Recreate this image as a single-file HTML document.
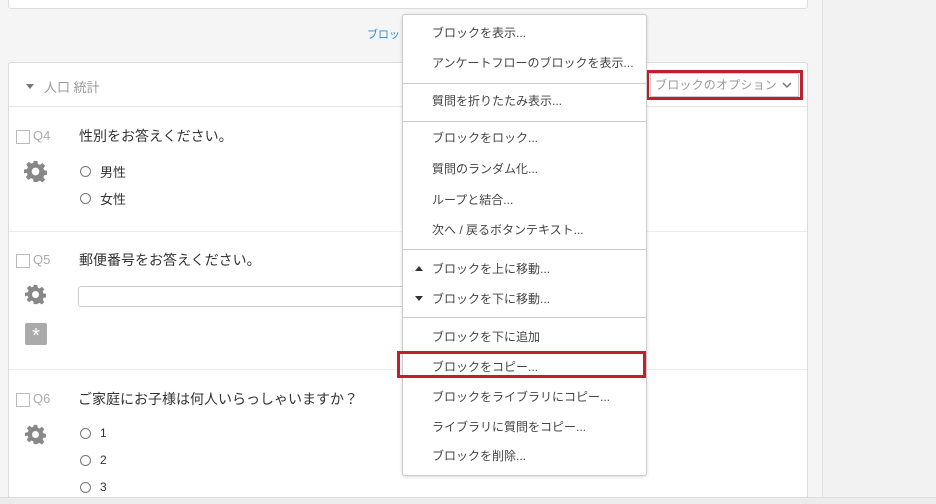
<!DOCTYPE html>
<html><head><meta charset="utf-8"><style>
*{box-sizing:border-box;margin:0;padding:0}
body{width:936px;height:504px;overflow:hidden;background:#f5f5f5;font-family:"Liberation Sans","Noto Sans CJK JP",sans-serif;position:relative;color:#333}
.abs{position:absolute}
.card{background:#fff;border:1px solid #dcdcdc}
.side{left:822px;top:0;width:114px;height:497px;background:#f2f2f2;border-left:1px solid #e2e2e2}
.bottom{left:0;top:497px;width:936px;height:7px;background:#ececec;border-top:1px solid #ddd}
.t{font-size:13px;white-space:nowrap}
.cb{width:14px;height:14px;border:1px solid #bbb;background:#fff}
.ql{font-size:13px;color:#aaa}
.radio{width:11px;height:11px;border:1px solid #777;border-radius:50%}
.menu{left:402px;top:14px;width:245px;height:462px;background:#fff;border:1px solid #ccc;border-radius:3px;box-shadow:0 1px 3px rgba(0,0,0,.15)}
.mi{position:absolute;left:29px;font-size:12px;color:#444;white-space:nowrap;letter-spacing:0}
.sep{position:absolute;left:0;width:243px;height:1px;background:#ccc}
.red{border:3px solid #c0202e}
</style></head><body>
<div class="abs card" style="left:8px;top:-2px;width:800px;height:11px;border-radius:0 0 3px 3px"></div>
<div class="abs t" style="left:367px;top:26px;color:#2b8fd1;font-size:11px">ブロッ</div>
<div class="abs side"></div>
<div class="abs card" style="left:8px;top:62px;width:800px;height:440px;border-radius:3px"></div>
<div class="abs" style="left:9px;top:106px;width:798px;height:1px;background:#e6e6e6"></div>
<div class="abs" style="left:9px;top:231px;width:798px;height:1px;background:#ececec"></div>
<div class="abs" style="left:9px;top:369px;width:798px;height:1px;background:#ececec"></div>
<div class="abs" style="left:26px;top:84px;width:0;height:0;border-left:4px solid transparent;border-right:4px solid transparent;border-top:5px solid #777"></div>
<div class="abs t" style="left:44px;top:77px;color:#999">人口 統計</div>
<!-- Q4 -->
<div class="abs cb" style="left:16px;top:130px"></div><div class="abs ql" style="left:33px;top:128px">Q4</div>
<div class="abs t" style="left:79px;top:126px;font-size:14px">性別をお答えください。</div>
<svg class="abs" style="left:24px;top:160px" width="23" height="23" viewBox="0 0 24 24"><path fill="#888" d="M10 1h4l.6 3.2 2 .9 2.7-1.9 2.8 2.8-1.9 2.7.9 2 3.2.6v4l-3.2.6-.9 2 1.9 2.7-2.8 2.8-2.7-1.9-2 .9L14 23h-4l-.6-3.2-2-.9-2.7 1.9-2.8-2.8 1.9-2.7-.9-2L0 14v-4l3.2-.6.9-2L2.2 4.7 5 1.9l2.7 1.9 2-.9zM12 8a4 4 0 100 8 4 4 0 000-8z"/></svg>
<div class="abs radio" style="left:80px;top:166px"></div><div class="abs t" style="left:100px;top:162px">男性</div>
<div class="abs radio" style="left:80px;top:193px"></div><div class="abs t" style="left:100px;top:189px">女性</div>
<!-- Q5 -->
<div class="abs cb" style="left:16px;top:254px"></div><div class="abs ql" style="left:33px;top:252px">Q5</div>
<div class="abs t" style="left:79px;top:250px;font-size:14px">郵便番号をお答えください。</div>
<svg class="abs" style="left:25px;top:284px" width="21" height="21" viewBox="0 0 24 24"><path fill="#888" d="M10 1h4l.6 3.2 2 .9 2.7-1.9 2.8 2.8-1.9 2.7.9 2 3.2.6v4l-3.2.6-.9 2 1.9 2.7-2.8 2.8-2.7-1.9-2 .9L14 23h-4l-.6-3.2-2-.9-2.7 1.9-2.8-2.8 1.9-2.7-.9-2L0 14v-4l3.2-.6.9-2L2.2 4.7 5 1.9l2.7 1.9 2-.9zM12 8a4 4 0 100 8 4 4 0 000-8z"/></svg>
<div class="abs" style="left:25px;top:323px;width:22px;height:22px;background:#aaa;border-radius:2px;color:#fff;font-size:20px;line-height:26px;text-align:center">*</div>
<div class="abs" style="left:78px;top:286px;width:330px;height:21px;border:1px solid #ccc;border-radius:3px;background:#fff"></div>
<!-- Q6 -->
<div class="abs cb" style="left:16px;top:393px"></div><div class="abs ql" style="left:33px;top:391px">Q6</div>
<div class="abs t" style="left:78px;top:389px;font-size:14px">ご家庭にお子様は何人いらっしゃいますか？</div>
<svg class="abs" style="left:25px;top:424px" width="21" height="21" viewBox="0 0 24 24"><path fill="#888" d="M10 1h4l.6 3.2 2 .9 2.7-1.9 2.8 2.8-1.9 2.7.9 2 3.2.6v4l-3.2.6-.9 2 1.9 2.7-2.8 2.8-2.7-1.9-2 .9L14 23h-4l-.6-3.2-2-.9-2.7 1.9-2.8-2.8 1.9-2.7-.9-2L0 14v-4l3.2-.6.9-2L2.2 4.7 5 1.9l2.7 1.9 2-.9zM12 8a4 4 0 100 8 4 4 0 000-8z"/></svg>
<div class="abs radio" style="left:80px;top:428px"></div><div class="abs t" style="left:100px;top:426px;font-size:12px">1</div>
<div class="abs radio" style="left:80px;top:455px"></div><div class="abs t" style="left:100px;top:453px;font-size:12px">2</div>
<div class="abs radio" style="left:80px;top:482px"></div><div class="abs t" style="left:100px;top:480px;font-size:12px">3</div>
<div class="abs bottom"></div>
<!-- options button -->
<div class="abs red" style="left:646px;top:70px;width:157px;height:30px"></div>
<div class="abs" style="left:650px;top:73px;width:149px;height:24px;border:1px solid #ccc;background:#fff"></div>
<div class="abs t" style="left:655px;top:76px;color:#999;font-size:12px;letter-spacing:.2px">ブロックのオプション</div>
<svg class="abs" style="left:782px;top:82px" width="10" height="7" viewBox="0 0 10 7"><path d="M1 1l4 4 4-4" stroke="#777" stroke-width="1.5" fill="none"/></svg>
<!-- menu -->
<div class="abs menu">
<div class="mi" style="top:9px">ブロックを表示...</div>
<div class="mi" style="top:39px">アンケートフローのブロックを表示...</div>
<div class="sep" style="top:68px"></div>
<div class="mi" style="top:77px">質問を折りたたみ表示...</div>
<div class="sep" style="top:106px"></div>
<div class="mi" style="top:114px">ブロックをロック...</div>
<div class="mi" style="top:145px">質問のランダム化...</div>
<div class="mi" style="top:176px">ループと結合...</div>
<div class="mi" style="top:206px">次へ / 戻るボタンテキスト...</div>
<div class="sep" style="top:234px"></div>
<div class="abs" style="left:12px;top:251px;border-left:4px solid transparent;border-right:4px solid transparent;border-bottom:5px solid #333"></div>
<div class="mi" style="top:245px">ブロックを上に移動...</div>
<div class="abs" style="left:12px;top:281px;border-left:4px solid transparent;border-right:4px solid transparent;border-top:5px solid #333"></div>
<div class="mi" style="top:275px">ブロックを下に移動...</div>
<div class="sep" style="top:302px"></div>
<div class="mi" style="top:313px">ブロックを下に追加</div>
<div class="mi" style="top:343px">ブロックをコピー...</div>
<div class="mi" style="top:373px">ブロックをライブラリにコピー...</div>
<div class="mi" style="top:403px">ライブラリに質問をコピー...</div>
<div class="mi" style="top:432px">ブロックを削除...</div>
</div>
<div class="abs red" style="left:397px;top:351px;width:249px;height:27px"></div>
</body></html>
